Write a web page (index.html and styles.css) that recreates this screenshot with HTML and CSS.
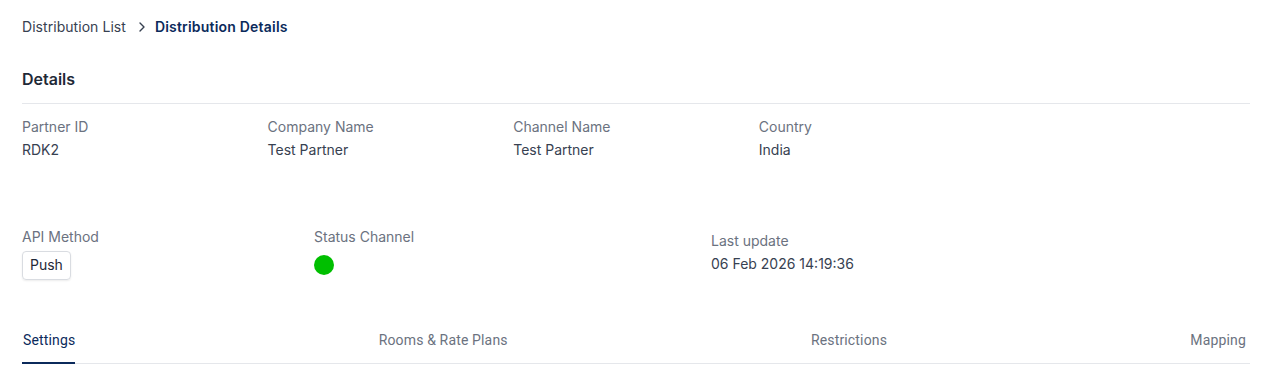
FILE: index.html
```html
<!DOCTYPE html>
<html>
<head>
  <title>Distribution Details</title>
  <meta charset="UTF-8">
  <link rel="stylesheet" href="styles.css">
</head>
<body>

<div class="page">
  <div class="breadcrumb">
    <span class="crumb">Distribution List</span>
    <svg class="chevron" width="16" height="16" viewBox="0 0 16 16"><path d="M6 4l4 4-4 4" fill="none" stroke="#374151" stroke-width="1.4" stroke-linecap="round" stroke-linejoin="round"/></svg>
    <span class="crumb current">Distribution Details</span>
  </div>

  <h2 class="section-title">Details</h2>

  <div class="info-grid">
    <div class="field">
      <div class="label">Partner ID</div>
      <div class="value">RDK2</div>
    </div>
    <div class="field">
      <div class="label">Company Name</div>
      <div class="value">Test Partner</div>
    </div>
    <div class="field">
      <div class="label">Channel Name</div>
      <div class="value">Test Partner</div>
    </div>
    <div class="field">
      <div class="label">Country</div>
      <div class="value">India</div>
    </div>
  </div>

  <div class="status-row">
    <div class="field">
      <div class="label">API Method</div>
      <span class="chip">Push</span>
    </div>
    <div class="field">
      <div class="label">Status Channel</div>
      <span class="dot"></span>
    </div>
    <div class="field field-low">
      <div class="label">Last update</div>
      <div class="value">06 Feb 2026 14:19:36</div>
    </div>
  </div>

  <div class="tabs">
    <div class="tab active">Settings</div>
    <div class="tab">Rooms &amp; Rate Plans</div>
    <div class="tab">Restrictions</div>
    <div class="tab">Mapping</div>
  </div>
</div>

</body>
</html>
```

FILE: styles.css
```css
body {
    margin: 0;
    background-color: white;
    font-family: Inter, "Liberation Sans", sans-serif;
    font-size: 14px;
    color: #374151;
}
.page {
    padding: 17px 21px 0 22px;
}
.breadcrumb {
    display: flex;
    align-items: center;
    gap: 6px;
    line-height: 20px;
}
.chevron {
    margin: 0 -1px 0 2px;
}
.crumb {
    color: #374151;
    letter-spacing: 0.05px;
}
.crumb.current {
    color: #0b2a5b;
    font-weight: 600;
    letter-spacing: 0.2px;
}
.section-title {
    margin: 30px 0 0 0;
    font-size: 16px;
    font-weight: 600;
    line-height: 24px;
    color: #1f2937;
    padding-bottom: 12px;
    border-bottom: 1px solid #e5e7eb;
}
.info-grid {
    display: grid;
    grid-template-columns: repeat(5, 1fr);
    padding-top: 13px;
}
.label {
    color: #6b7280;
    line-height: 20px;
}
.value {
    color: #374151;
    line-height: 20px;
    margin-top: 3px;
}
.status-row {
    display: grid;
    grid-template-columns: 292px 397px 1fr;
    margin-top: 67px;
}
.field-low {
    padding-top: 4px;
}
.chip {
    display: inline-block;
    margin-top: 4px;
    padding: 0 7px;
    height: 27px;
    line-height: 26px;
    border: 1px solid #d9dce1;
    border-radius: 4px;
    box-shadow: 0 1px 2px rgba(0, 0, 0, 0.08);
    color: #1f2937;
}
.dot {
    display: block;
    width: 20px;
    height: 20px;
    margin-top: 8px;
    border-radius: 50%;
    background-color: #00bf00;
}
.tabs {
    display: flex;
    justify-content: space-between;
    margin-top: 50px;
    border-bottom: 1px solid #e5e7eb;
    padding: 0 4px 0 1px;
    font-family: Roboto, "Liberation Sans", sans-serif;
    letter-spacing: 0.15px;
}
.tab {
    line-height: 20px;
    padding-bottom: 12px;
    margin-bottom: -1px;
    color: #6b7280;
    border-bottom: 2px solid transparent;
}
.tab.active {
    color: #0b2a5b;
    border-bottom-color: #0b2a5b;
    margin-left: -1px;
    padding-left: 1px;
}
```
